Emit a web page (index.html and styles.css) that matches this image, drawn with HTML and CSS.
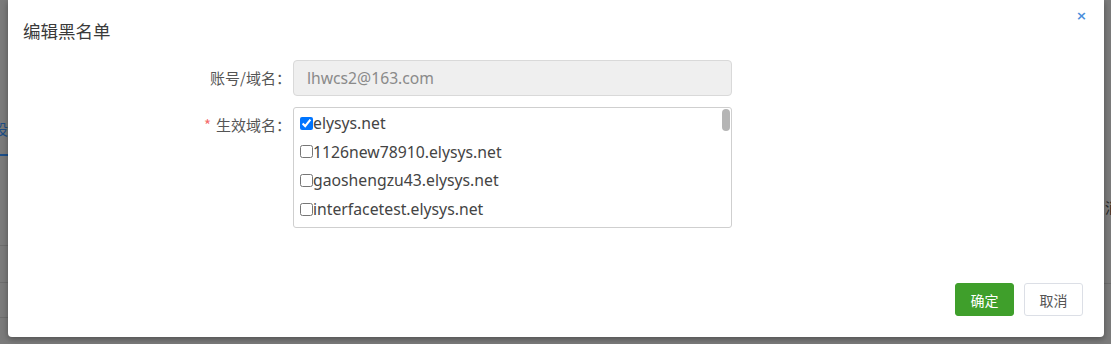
FILE: index.html
```html
<!DOCTYPE html>
<html lang="zh">
<head>
<meta charset="utf-8">
<link rel="stylesheet" href="styles.css">
</head>
<body>
<div class="backdrop">
  <span class="bg-frag bg-left-text">设</span>
  <span class="bg-frag bg-left-line"></span>
  <span class="bg-frag bg-left-rule r1"></span>
  <span class="bg-frag bg-left-rule r2"></span>
  <span class="bg-frag bg-left-rule r3"></span>
  <span class="bg-frag bg-right-text">消</span>
  <span class="bg-frag bg-right-rule r4"></span>
</div>
<div class="dialog">
  <div class="dialog-head">
    <h2 class="dialog-title">编辑黑名单</h2>
    <span class="dialog-close">×</span>
  </div>
  <div class="dialog-body">
    <div class="form-row">
      <label class="form-label">账号/域名：</label>
      <div class="form-control">
        <input class="text-input" type="text" value="lhwcs2@163.com" disabled>
      </div>
    </div>
    <div class="form-row">
      <label class="form-label"><span class="req">*</span>生效域名：</label>
      <div class="form-control">
        <div class="check-list">
          <div class="check-scroll">
            <label class="check-item"><input type="checkbox" checked>elysys.net</label>
            <label class="check-item"><input type="checkbox">1126new78910.elysys.net</label>
            <label class="check-item"><input type="checkbox">gaoshengzu43.elysys.net</label>
            <label class="check-item"><input type="checkbox">interfacetest.elysys.net</label>
            <label class="check-item"><input type="checkbox">mail.elysys.net</label>
            <label class="check-item"><input type="checkbox">test.elysys.net</label>
            <label class="check-item"><input type="checkbox">demo.elysys.net</label>
            <label class="check-item"><input type="checkbox">www.elysys.net</label>
          </div>
          <span class="scroll-thumb"></span>
        </div>
      </div>
    </div>
  </div>
  <div class="dialog-foot">
    <button class="btn btn-primary">确定</button>
    <button class="btn btn-default">取消</button>
  </div>
</div>
</body>
</html>
```

FILE: styles.css
```css
html, body {
  margin: 0;
  padding: 0;
}
body {
  width: 1111px;
  height: 344px;
  overflow: hidden;
  background: #7b7b7b;
  font-family: "Noto Sans", "Noto Sans CJK SC", sans-serif;
  position: relative;
}
.backdrop {
  position: absolute;
  inset: 0;
}
.bg-frag {
  position: absolute;
  display: block;
}
.bg-left-text {
  left: -7px;
  top: 119px;
  font-size: 15px;
  color: #1f4f86;
  font-family: "Noto Sans CJK SC", sans-serif;
  line-height: 20px;
}
.bg-left-line {
  left: 0;
  top: 154px;
  width: 8px;
  height: 2px;
  background: #1c4f8a;
}
.bg-left-rule {
  left: 0;
  width: 8px;
  height: 1px;
  background: #6d6d6d;
}
.r1 { top: 245px; }
.r2 { top: 282px; }
.r3 { top: 317px; }
.bg-right-text {
  left: 1105px;
  top: 198px;
  font-size: 14px;
  line-height: 18px;
  color: #222;
  font-family: "Noto Sans CJK SC", sans-serif;
}
.bg-right-rule {
  left: 1104px;
  top: 283px;
  width: 7px;
  height: 1px;
  background: #6d6d6d;
}
.dialog {
  position: absolute;
  left: 8px;
  top: 0;
  width: 1096px;
  height: 337px;
  background: #fff;
  border-radius: 0 0 4px 4px;
  box-shadow: 0 2px 6px rgba(0, 0, 0, 0.35);
  display: flex;
  flex-direction: column;
}
.dialog-head {
  height: 60px;
  position: relative;
}
.dialog-title {
  margin: 0;
  padding: 20px 0 0 15px;
  font-size: 17.5px;
  font-weight: normal;
  line-height: 22px;
  color: #3a3a3a;
  font-family: "Noto Sans CJK SC", sans-serif;
}
.dialog-close {
  position: absolute;
  right: 17px;
  top: 7px;
  font-size: 13px;
  line-height: 18px;
  color: #4a8fdc;
  font-family: "DejaVu Sans", sans-serif;
  font-weight: bold;
}
.dialog-body {
  display: flex;
  flex-direction: column;
  gap: 11px;
}
.form-row {
  display: flex;
  align-items: flex-start;
}
.form-label {
  width: 285px;
  box-sizing: border-box;
  padding-right: 2px;
  text-align: right;
  font-size: 15px;
  color: #555;
  font-family: "Noto Sans CJK SC", sans-serif;
  line-height: 20px;
  padding-top: 8px;
}
.req {
  color: #f56c6c;
  margin-right: 5px;
}
.form-control {
  width: 439px;
}
.text-input {
  display: block;
  width: 100%;
  height: 36px;
  box-sizing: border-box;
  border: 1px solid #d9d9d9;
  border-radius: 4px;
  background: #efefef;
  padding: 0 13px;
  font-size: 15.7px;
  color: #8a8a8a;
  font-family: "Noto Sans", sans-serif;
  margin: 0;
}
.check-list {
  position: relative;
  height: 121px;
  box-sizing: border-box;
  border: 1px solid #cfcfcf;
  border-radius: 3px;
  overflow: hidden;
}
.check-scroll {
  height: 119px;
  box-sizing: border-box;
  padding: 1px 0 0 6px;
  overflow-y: auto;
  scrollbar-width: none;
}
.check-item {
  display: flex;
  align-items: center;
  height: 28.6px;
  font-size: 15.75px;
  color: #444;
  font-family: "Noto Sans", sans-serif;
  white-space: nowrap;
}
.check-item input {
  margin: 0;
  width: 13px;
  height: 13px;
}
.scroll-thumb {
  position: absolute;
  right: 1px;
  top: 1px;
  width: 8px;
  height: 22px;
  border-radius: 4px;
  background: #b5b5b5;
}
.dialog-foot {
  margin-top: auto;
  display: flex;
  justify-content: flex-end;
  gap: 10px;
  padding: 0 21px 21px 0;
}
.btn {
  width: 59px;
  height: 33px;
  box-sizing: border-box;
  border-radius: 3px;
  font-size: 14px;
  font-family: "Noto Sans CJK SC", sans-serif;
  padding: 0;
  cursor: pointer;
}
.btn-primary {
  background: #3f9f2b;
  border: 1px solid #3f9f2b;
  color: #fff;
}
.btn-default {
  background: #fff;
  border: 1px solid #dcdfe6;
  color: #555;
}
```
